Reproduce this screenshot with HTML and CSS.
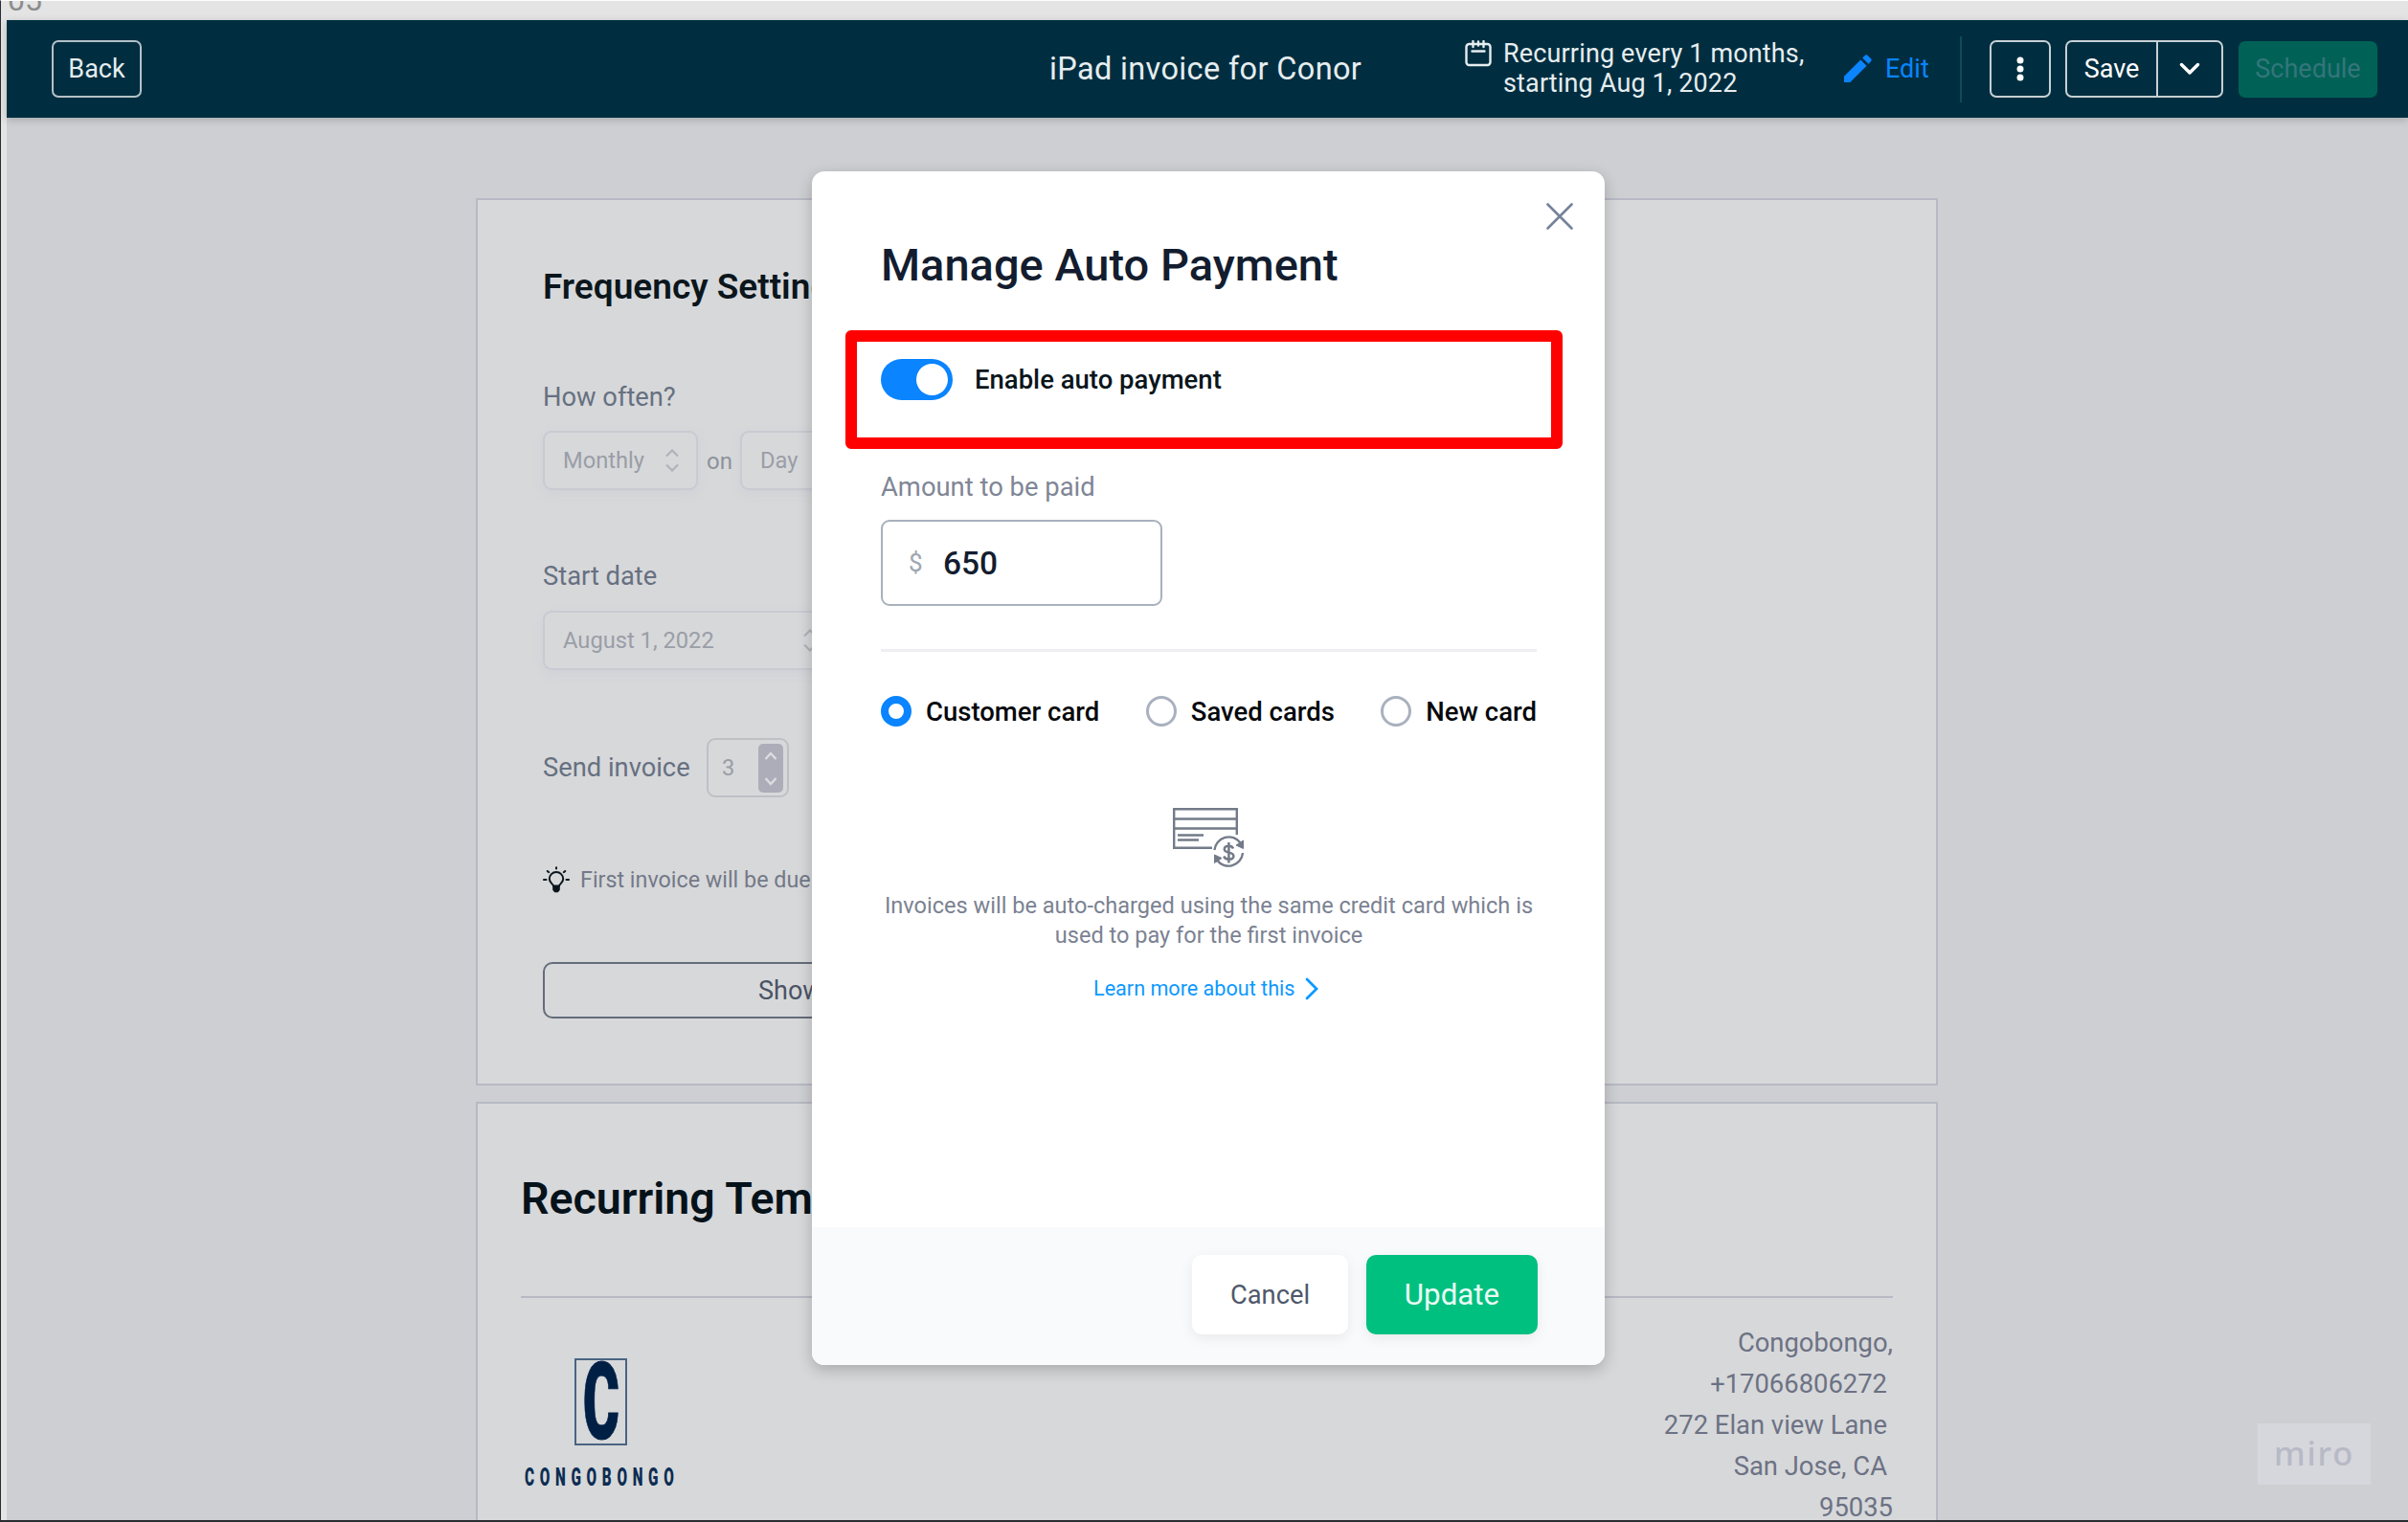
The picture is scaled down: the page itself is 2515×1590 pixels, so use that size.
FILE: index.html
```html
<!DOCTYPE html>
<html lang="en">
<head>
<meta charset="utf-8">
<title>iPad invoice for Conor</title>
<link rel="stylesheet" href="styles.css">
</head>
<body>
<div class="board">
  <div class="frame-label">05</div>
  <div class="app">
    <header class="topbar">
      <button class="btn btn-back">Back</button>
      <div class="doc-title"><span>iPad invoice for Conor</span></div>
      <div class="schedule-info">
        <svg class="calendar" width="28" height="28" viewBox="0 0 28 28" fill="none" stroke="#e6edef" stroke-width="2.4" stroke-linecap="round" stroke-linejoin="round"><rect x="1.5" y="4" width="25" height="22" rx="3"/><path d="M8.5 1v6M19.500 1v6M14 1.500v4M7.500 11.500h13"/></svg>
        <div class="recurring"><span>Recurring every 1 months,</span><br><span>starting Aug 1, 2022</span></div>
      </div>
      <a class="edit">
        <svg width="30" height="30" viewBox="0 0 30 30" fill="#0a84ff"><path d="M1 29v-6.300L18.300 5.400l6.300 6.300L7.300 29zM20.200 3.500l2.300-2.300a2.400 2.400 0 0 1 3.400 0l2.900 2.900a2.400 2.400 0 0 1 0 3.400l-2.300 2.300z"/></svg>
        <span>Edit</span>
      </a>
      <div class="divider"></div>
      <button class="btn btn-more"><svg width="8" height="26" viewBox="0 0 8 26" fill="#fff"><circle cx="4" cy="4" r="3.500"/><circle cx="4" cy="13" r="3.500"/><circle cx="4" cy="22" r="3.500"/></svg></button>
      <div class="btn save-group">
        <span class="save">Save</span>
        <span class="save-menu"><svg width="24" height="16" viewBox="0 0 24 16" fill="none" stroke="#fff" stroke-width="3.400" stroke-linecap="round" stroke-linejoin="round"><path d="M3.500 3.500l8.500 8.500 8.500-8.500"/></svg></span>
      </div>
      <button class="btn-schedule">Schedule</button>
    </header>

    <main class="page">
      <section class="card settings">
        <h2><span>Frequency Settings</span></h2>
        <label class="field-label">How often?</label>
        <div class="row">
          <div class="select monthly"><span>Monthly</span><svg class="updown" width="16" height="24" viewBox="0 0 16 24"><path d="M2 7.500l6-6 6 6M2 16.500l6 6 6-6"/></svg></div>
          <span class="on-day">on</span>
          <div class="select day"><span>Day</span></div>
        </div>
        <label class="field-label start">Start date</label>
        <div class="row">
          <div class="select date"><span>August 1, 2022</span><svg class="updown" width="16" height="24" viewBox="0 0 16 24"><path d="M2 7.500l6-6 6 6M2 16.500l6 6 6-6"/></svg></div>
        </div>
        <div class="row send">
          <label class="field-label inline">Send invoice</label>
          <div class="number"><span>3</span>
            <span class="spinner"><svg width="26" height="51" viewBox="0 0 26 51"><path d="M7.500 16l5.500-6 5.500 6M7.500 36l5.500 6 5.500-6"/></svg></span>
          </div>
        </div>
        <div class="tip">
          <svg width="28" height="28" viewBox="0 0 28 28" fill="none" stroke="#0b161c" stroke-width="2" stroke-linecap="round"><path d="M11 20.500c0-1.800-4.200-3.200-4.200-7.300a7.200 7.200 0 0 1 14.400 0c0 4.100-4.200 5.500-4.200 7.300z"/><path d="M11.200 22h5.600v2.300l-1.500 2h-2.600l-1.500-2z" fill="#0b161c"/><path d="M14 1.200v1.300M4.800 5l1.400 1.200M23.200 5l-1.400 1.200M.9 14h2.600M24.500 14h2.600"/></svg>
          <span>First invoice will be due</span>
        </div>
        <button class="show">Show</button>
      </section>

      <section class="card template">
        <h1><span>Recurring Template</span></h1>
        <div class="rule"></div>
        <div class="company">
          <div class="logo">
            <div class="logo-box"><span class="logo-c">C</span></div>
            <div class="logo-name"><span class="logo-text">CONGOBONGO</span></div>
          </div>
          <address>
            <span>Congobongo,</span>
            <span class="pad">+17066806272</span>
            <span class="pad">272 Elan view Lane</span>
            <span class="pad">San Jose, CA</span>
            <span>95035</span>
          </address>
        </div>
      </section>
    </main>

    <section class="modal">
      <svg class="close" width="28" height="28" viewBox="0 0 28 28" fill="none" stroke="#75829a" stroke-width="2.600" stroke-linecap="round"><path d="M1.500 1.500l25 25M26.500 1.500l-25 25"/></svg>
      <div class="modal-body">
        <h1 class="modal-title"><span>Manage Auto Payment</span></h1>
        <div class="toggle-row">
          <span class="toggle"><span class="knob"></span></span>
          <span class="strong">Enable auto payment</span>
        </div>
        <label class="amount-label">Amount to be paid</label>
        <div class="amount"><span class="dollar">$</span><span>650</span></div>
        <div class="modal-rule"></div>
        <div class="radios">
          <label class="strong"><i class="radio checked"></i><span>Customer card</span></label>
          <label class="strong"><i class="radio"></i><span>Saved cards</span></label>
          <label class="strong"><i class="radio"></i><span>New card</span></label>
        </div>
        <svg class="card-icon" width="75" height="63" viewBox="0 0 75 63" fill="none" stroke="#737b89" stroke-width="2.400">
          <path d="M41 41.800H1.200V1.200h65.600V28M1.200 11.500h65.600M1.200 21.500h65.600"/>
          <path d="M5 28.500h27M5 33.500h22" stroke-width="2.600"/>
          <path d="M43.500 44a15 15 0 0 1 27-7.500M73 47a15 15 0 0 1-27 7.500"/>
          <path d="M73.500 34v8.500l-7.500-3.500zM43.500 57.500V49l7.500 3.500z" fill="#737b89" stroke-width="1"/>
          <path d="M63 42.500c-.8-2-2.600-2.700-4.600-2.700-2.600 0-4.600 1.300-4.600 3.400 0 4.700 9.600 2.200 9.600 7 0 2.200-2.200 3.500-4.900 3.500-2.500 0-4.500-1-5.200-3.200M58.400 36v21.500" stroke-width="2.500"/>
        </svg>
        <p class="note"><span>Invoices will be auto-charged using the same credit card which is</span><br><span>used to pay for the first invoice</span></p>
        <a class="learn"><span>Learn more about this</span><svg width="15" height="24" viewBox="0 0 15 24" fill="none" stroke="#0d99ff" stroke-width="2.800" stroke-linecap="round"><path d="M2 2l10 10-10 10"/></svg></a>
      </div>
      <footer class="modal-footer">
        <button class="cancel">Cancel</button>
        <button class="update">Update</button>
      </footer>
    </section>
    <div class="highlight"></div>
    <div class="miro">miro</div>
  </div>
</div>
</body>
</html>
```
FILE: styles.css
```css
* { box-sizing: border-box; }
body { margin: 0; font-family: Roboto, "Liberation Sans", sans-serif; }
h1, h2, p { margin: 0; font-weight: 500; }
button { font: inherit; padding: 0; margin: 0; background: none; cursor: pointer; }
span { white-space: nowrap; }
svg { display: block; flex: none; }

.board { position: relative; width: 2515px; height: 1590px; overflow: hidden; background: #e4e4e4; border-top: 1px solid #fdfdfd; border-left: 1px solid #2c2d30; border-bottom: 2px solid #2c2d30; padding-left: 6px; display: flex; flex-direction: column; }
.frame-label { display: flex; align-items: flex-end; height: 20px; flex: none; padding-bottom: 5px; overflow: hidden; font-size: 32px; line-height: 32px; text-indent: 1px; color: #8d8d8d; }
.app { flex: 1; min-height: 0; display: flex; flex-direction: column; background: #cecfd3; }

.topbar { position: relative; flex: none; height: 102px; display: flex; align-items: center; padding: 0 31px 0 47px; background: #002e40; box-shadow: 0 2px 8px rgba(0,0,0,.2); color: #e6edef; font-size: 27px; }
.btn { height: 60px; border: 2px solid #b4c1c7; border-radius: 7px; display: flex; align-items: center; justify-content: center; flex: none; color: inherit; }
.btn-back { width: 94px; }
.doc-title { margin-left: 948px; width: 327px; font-size: 32.500px; letter-spacing: .35px; flex: none; }
.schedule-info { display: flex; margin-left: 107px; width: 356px; flex: none; line-height: 31.500px; letter-spacing: .15px; }
.calendar { margin: 1px 12px 0 0; }
.edit { display: flex; align-items: center; gap: 14px; margin-left: 39px; width: 90px; color: #0a84ff; }
.divider { width: 2px; height: 69px; background: #0c4c5a; margin-left: 32px; margin-right: 29px; }
.btn-more { width: 64px; border-color: #c6d0d4; }
.save-group { width: 165px; margin-left: 15px; align-items: stretch; border-color: #c6d0d4; }
.save { width: 95px; border-right: 2px solid #c6d0d4; display: flex; align-items: center; justify-content: center; color: #fff; }
.save-menu { flex: 1; display: flex; align-items: center; justify-content: center; }
.btn-schedule { width: 145px; height: 59px; margin-left: 16px; border: 0; border-radius: 7px; background: #006256; color: #34757b; }

.page { flex: 1; min-height: 0; overflow: hidden; padding: 84px 0 0 490px; }
.card { width: 1527px; background: #d7d8da; border: 2px solid #b7bac4; }
.settings { height: 927px; padding: 69px 0 0 68px; display: flex; flex-direction: column; }
.settings h2 { font-size: 37px; line-height: 44px; font-weight: 600; color: #0b161c; }
.field-label { margin-top: 76px; font-size: 27.300px; line-height: 34px; color: #667081; }
.field-label.start { margin-top: 73px; }
.field-label.inline { margin: 0; width: 171px; }
.row { display: flex; align-items: center; margin-top: 18px; height: 62px; flex: none; font-size: 23.700px; color: #9a9ea7; }
.start + .row { margin-top: 19px; }
.select { height: 62px; border: 2px solid #c9cad3; border-radius: 9px; display: flex; align-items: center; justify-content: space-between; padding: 0 19px; box-shadow: 0 4px 10px rgba(190,193,208,.25); }
.monthly { width: 162px; padding-right: 17px; }
.on-day { width: 44px; padding-left: 9px; padding-top: 2px; font-size: 24px; color: #8d929c; }
.day { width: 160px; }
.date { width: 307px; padding-right: 18px; }
.updown { fill: none; stroke: #b0b3ba; stroke-width: 2.2; }
.send { margin-top: 71px; }
.number { width: 86px; height: 62px; border: 2px solid #bdc1c6; border-radius: 9px; display: flex; align-items: center; justify-content: space-between; padding: 0 4px 0 14px; }
.spinner { width: 26px; height: 51px; border-radius: 5px; background: #acadb8; }
.spinner path { fill: none; stroke: #dcdde1; stroke-width: 2.4; }
.tip { display: flex; align-items: center; gap: 11px; height: 34px; margin-top: 69px; font-size: 23.300px; color: #737988; }
.show { width: 640px; height: 59px; margin-top: 69px; border: 2px solid #646c7b; border-radius: 10px; text-align: left; padding-left: 223px; font-size: 27px; color: #4a5365; }

.template { height: 520px; margin-top: 17px; padding: 71px 45px 0; }
.template h1 { font-size: 46.500px; line-height: 56px; font-weight: 600; color: #06121a; }
.rule { height: 2px; margin-top: 74px; background: #b7bac4; }
.company { display: flex; justify-content: space-between; }
.logo { margin-top: 63px; width: 170px; display: flex; flex-direction: column; }
.logo-box { width: 55px; height: 91px; margin-left: 56px; border: 2px solid #4a6482; display: flex; align-items: center; justify-content: center; }
.logo-c { margin: 0 -20px; font-weight: 900; font-size: 112px; line-height: 91px; color: #001f45; -webkit-text-stroke: 1px #001f45; transform: scaleX(.52); flex: none; }
.logo-name { margin-top: 18px; margin-left: 4px; height: 30px; }
.logo-text { display: inline-block; font-weight: 900; font-size: 25.500px; line-height: 30px; letter-spacing: 9.500px; color: #0c2d52; transform: scaleX(.6); transform-origin: 0 0; }
address { margin-top: 26px; font-style: normal; font-size: 27.400px; line-height: 43px; color: #6c7284; display: flex; flex-direction: column; align-items: flex-end; }
address .pad { padding-right: 6px; }

.modal { position: absolute; left: 847px; top: 178px; width: 828px; height: 1247px; border-radius: 13px; background: #fff; box-shadow: 0 5px 16px rgba(0,0,0,.22); display: flex; flex-direction: column; overflow: hidden; }
.close { position: absolute; right: 33px; top: 33px; }
.modal-body { padding: 70px 71px 0 72px; display: flex; flex-direction: column; }
.modal-title { font-size: 47px; line-height: 56px; color: #131d2f; }
.toggle-row { display: flex; align-items: center; gap: 23px; height: 43px; margin-top: 70px; }
.toggle { width: 75px; height: 43px; border-radius: 22px; background: #0a84ff; display: flex; align-items: center; justify-content: flex-end; padding-right: 5px; }
.knob { width: 33px; height: 33px; border-radius: 50%; background: #fff; }
.strong { font-size: 27.500px; font-weight: 500; color: #0b161c; }
.amount-label { font-size: 27.400px; line-height: 34px; margin-top: 74px; color: #7f8696; }
.amount { width: 294px; height: 90px; margin-top: 17px; border: 2px solid #a9b1bc; border-radius: 9px; display: flex; align-items: center; padding-left: 27px; font-size: 33.500px; font-weight: 500; color: #131d2f; }
.dollar { width: 36px; font-size: 26px; font-weight: 400; color: #a0a6b1; }
.modal-rule { height: 3px; margin-top: 45px; background: #eeeff3; }
.radios { display: flex; justify-content: space-between; height: 34px; margin-top: 45px; }
.radios label { display: flex; align-items: center; gap: 15px; color: #06090c; }
.radio { width: 32px; height: 32px; border: 3px solid #a9b1bf; border-radius: 50%; }
.radio.checked { border: 8px solid #0a84ff; }
.card-icon { margin: 84px 0 0 305px; }
.note { margin-top: 24px; text-align: center; font-size: 23.550px; line-height: 31px; font-weight: 400; color: #7b8292; }
.learn { margin-top: 25px; margin-left: 222px; display: flex; align-items: center; gap: 11px; font-size: 21.600px; line-height: 30px; color: #0d99ff; }
.modal-footer { margin-top: auto; height: 144px; background: #f8fafc; padding: 29px 70px 0; display: flex; justify-content: flex-end; gap: 19px; }
.cancel, .update { border: 0; border-radius: 10px; box-shadow: 0 4px 14px rgba(0,0,0,.07); }
.cancel { width: 163px; height: 83px; background: #fff; font-size: 27.300px; color: #4f586a; }
.update { width: 179px; height: 83px; background: #00c07f; font-size: 31.300px; color: #e9fbf4; }
.highlight { position: absolute; left: 882px; top: 344px; width: 749px; height: 124px; border: 12px solid #f00; border-radius: 6px; }
.miro { position: absolute; left: 2357px; top: 1486px; width: 118px; height: 64px; background: #d6d7dc; color: #b8b9c6; display: flex; align-items: center; justify-content: center; padding-bottom: 3px; font-family: "Noto Sans", sans-serif; font-size: 34.500px; font-weight: 500; letter-spacing: 1.800px; }
```
